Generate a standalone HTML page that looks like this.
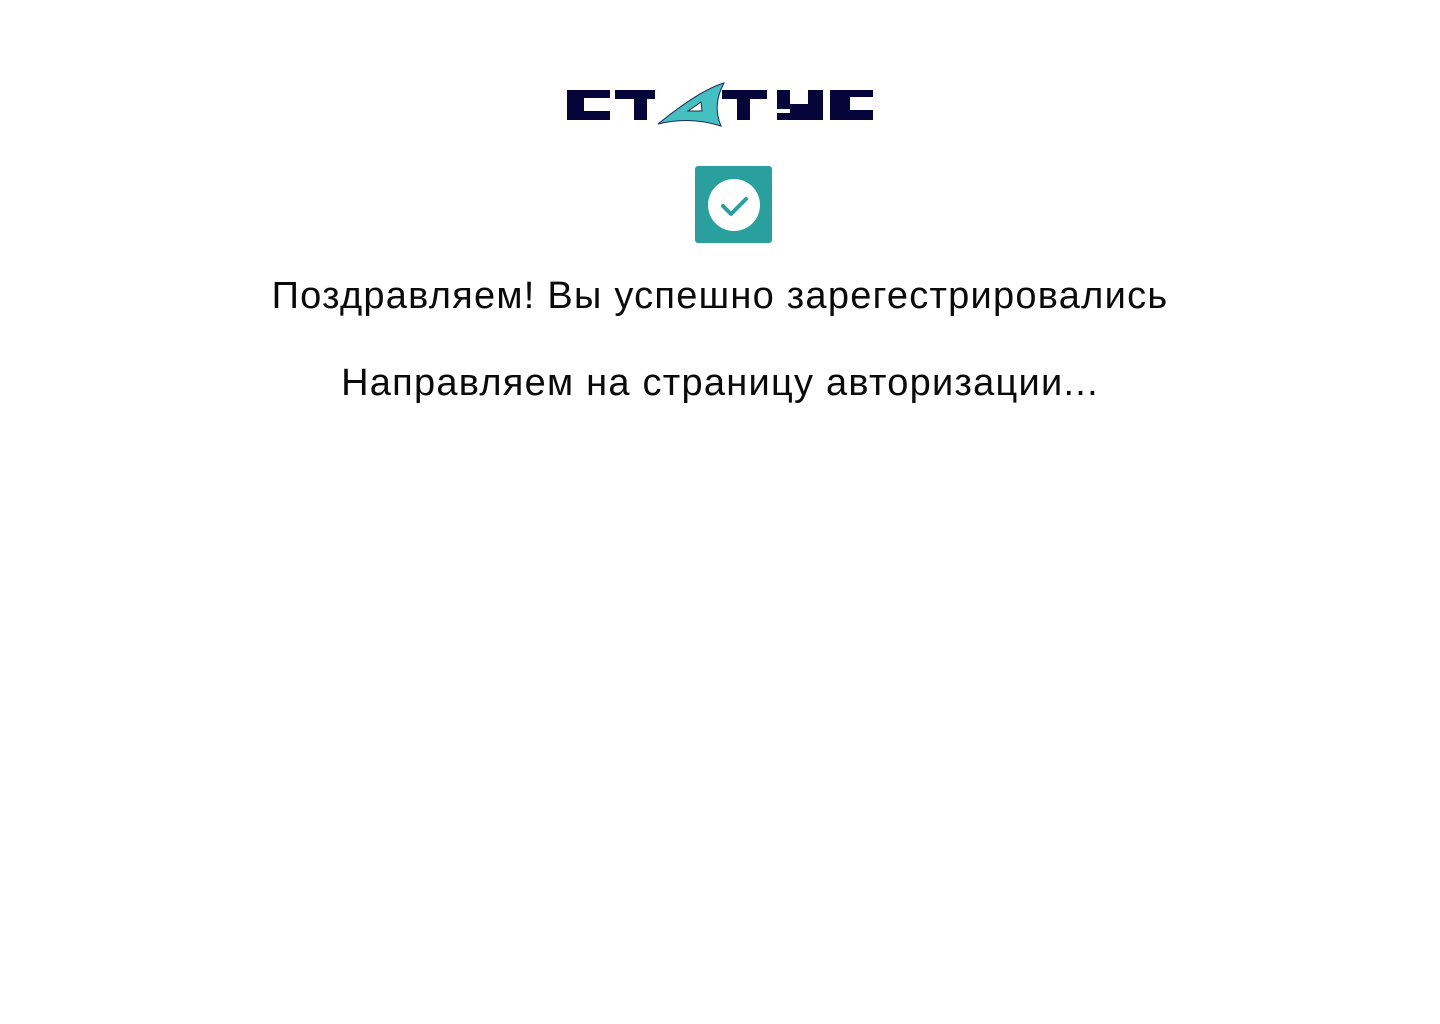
<!DOCTYPE html>
<html><head><meta charset="utf-8"><style>
html,body{margin:0;padding:0;background:#fff;width:1440px;height:1024px;overflow:hidden}
.t{position:absolute;left:0;width:1440px;text-align:center;font-family:"Liberation Sans",sans-serif;font-size:38px;line-height:38px;letter-spacing:1.25px;color:#0a0a0a;white-space:nowrap}
</style></head><body>
<svg style="position:absolute;left:0;top:0" width="1440" height="260">
<g fill="#05053a">
<path d="M567 90H610V98H584V111H610V120H567Z"/>
<path d="M615 90H655V99H647V120H634V99H615Z"/>
<path d="M722 90H767V99H750V120H737V99H722Z"/>
<rect x="777" y="90" width="13" height="19"/>
<rect x="808" y="90" width="15" height="30"/>
<rect x="777" y="113" width="46" height="7"/>
<rect x="790" y="104" width="18" height="9"/>
<path d="M830 90H873V97H850V110H873V120H830Z"/>
</g>
<path d="M658 124 Q700 90 724 83 Q712 105 721 126 Q690 116 658 124Z" fill="#45c0c0" stroke="#1a2a5a" stroke-width="1"/>
<path d="M688 111 L701 102 L702 111Z" fill="#fff" stroke="#1a2a5a" stroke-width="1"/>
<rect x="695" y="166" width="77" height="77" rx="3" fill="#2aa09e"/>
<circle cx="734" cy="205" r="26" fill="#fff"/>
<path d="M723 206 L731 214 L746 199" fill="none" stroke="#2aa09e" stroke-width="4" stroke-linecap="round" stroke-linejoin="round"/>
</svg>
<div class="t" style="top:277px">Поздравляем! Вы успешно зарегестрировались</div>
<div class="t" style="top:364px">Направляем на страницу авторизации...</div>
</body></html>
